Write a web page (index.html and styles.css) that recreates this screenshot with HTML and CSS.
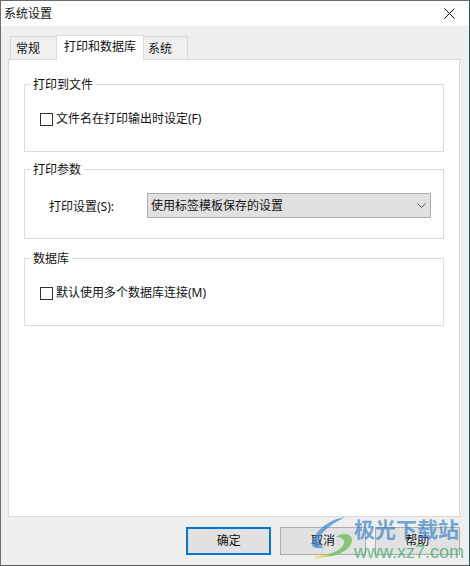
FILE: index.html
```html
<!DOCTYPE html>
<html lang="zh-CN">
<head>
<meta charset="utf-8">
<title>系统设置</title>
<link rel="stylesheet" href="styles.css">
</head>
<body>
<div class="window">
  <header class="titlebar">
    <span class="title">系统设置</span>
    <svg class="close" width="12" height="12" viewBox="0 0 12 12"><path d="M0.5 0.5L10.5 10.5M10.5 0.5L0.5 10.5" stroke="#111" stroke-width="1" fill="none"/></svg>
  </header>
  <div class="content">
    <nav class="tabs">
      <div class="tab tab-first">常规</div>
      <div class="tab tab-active">打印和数据库</div>
      <div class="tab tab-last">系统</div>
    </nav>
    <main class="panel">
      <section class="group group-a">
        <div class="legend">打印到文件</div>
        <label class="check"><span class="box"></span>文件名在打印输出时设定(F)</label>
      </section>
      <section class="group group-b">
        <div class="legend">打印参数</div>
        <div class="field">
          <span class="field-label">打印设置(S):</span>
          <div class="select">
            <span>使用标签模板保存的设置</span>
            <svg width="9" height="5" viewBox="0 0 9 5"><path d="M0.5 0.5L4.5 4.5L8.5 0.5" stroke="#555" stroke-width="1" fill="none"/></svg>
          </div>
        </div>
      </section>
      <section class="group group-c">
        <div class="legend">数据库</div>
        <label class="check"><span class="box"></span>默认使用多个数据库连接(M)</label>
      </section>
    </main>
    <footer class="actions">
      <button class="btn btn-default">确定</button>
      <button class="btn btn-cancel">取消</button>
      <button class="btn">帮助</button>
    </footer>
  </div>
  <div class="watermark">
    <svg class="wm-logo" width="44" height="44" viewBox="0 0 44 44">
      <path d="M0 27C2 15 15 3 33 0C22 6 12 12 8 20C6 25 8 29 12 31C5 32 0 31 0 27Z" fill="#3f8fd6" fill-opacity="0.75"/>
      <path d="M8 39C22 37 33 31 32 24C31 21 28 20 24 20C30 15 41 16 40 24C39 32 24 42 8 39Z" fill="#6fbf5a" fill-opacity="0.8"/>
      <path d="M3 39C8 39 14 38 19 36C14 40 8 42 3 41Z" fill="#f2d64b" fill-opacity="0.75"/>
    </svg>
    <div class="wm-name">极光下载站</div>
    <div class="wm-url">www.xz7.com</div>
  </div>
</div>
</body>
</html>
```
FILE: styles.css
```css
* { box-sizing: border-box; }
html, body { margin: 0; padding: 0; }
body {
  width: 470px;
  height: 566px;
  overflow: hidden;
  font-family: "Noto Sans", "Noto Sans CJK SC", sans-serif;
  font-size: 12px;
  line-height: 16px;
  color: #111;
}
.window {
  position: relative;
  width: 470px;
  height: 566px;
  display: flex;
  flex-direction: column;
  background: #efefef;
  border-top: 1px solid #5f6b75;
  border-left: 1px solid #6e6e6e;
  border-right: 1px solid #1f5f70;
  border-bottom: 1px solid #555;
}
.titlebar {
  height: 25px;
  flex: none;
  background: #fff;
  display: flex;
  align-items: center;
  justify-content: space-between;
  padding: 0 13px 0 3px;
}
.title { font-size: 12px; }
.close { display: block; }
.content {
  flex: 1;
  display: flex;
  flex-direction: column;
  padding: 0 9px 0 7px;
}
.tabs {
  height: 34px;
  flex: none;
  display: flex;
  align-items: flex-end;
  padding-left: 2px;
  position: relative;
  z-index: 1;
  margin-bottom: -1px;
}
.tab {
  height: 23px;
  border: 1px solid #d9d9d9;
  border-bottom: 0;
  background: #f0f0f0;
  padding-top: 4px;
  margin-bottom: 1px;
}
.tab-first { width: 46px; padding-left: 5px; border-right: 0; }
.tab-active {
  width: 88px;
  height: 25px;
  margin-bottom: 0;
  background: #fff;
  padding: 3px 0 0 7px;
}
.tab-last { width: 44px; padding-left: 4px; border-left: 0; }
.panel {
  height: 458px;
  flex: none;
  background: #fff;
  border: 1px solid #d9d9d9;
  padding: 24px 15px 0;
  display: flex;
  flex-direction: column;
}
.group {
  width: 420px;
  border: 1px solid #dcdcdc;
  flex: none;
}
.group-a { height: 68px; }
.group-b { height: 70px; margin-top: 17px; }
.group-c { height: 68px; margin-top: 19px; }
.legend {
  width: fit-content;
  margin: -8px 0 0 5px;
  padding: 0 3px;
  height: 16px;
  background: #fff;
}
.check {
  display: flex;
  align-items: center;
  margin: 18px 0 0 15px;
  height: 16px;
}
.box {
  width: 13px;
  height: 13px;
  border: 1px solid #333;
  background: #fff;
  margin-right: 3px;
  flex: none;
}
.field {
  display: flex;
  align-items: center;
  margin-top: 15px;
  padding-left: 24px;
}
.field-label { width: 98px; flex: none; padding-top: 3px; }
.select {
  width: 284px;
  height: 25px;
  background: #e1e1e1;
  border: 1px solid #adadad;
  display: flex;
  align-items: center;
  justify-content: space-between;
  padding: 0 4px 0 3px;
}
.actions {
  flex: 1;
  display: flex;
  gap: 9px;
  padding: 10px 0 0 178px;
}
.btn {
  width: 86px;
  height: 28px;
  padding: 0;
  background: #e1e1e1;
  border: 1px solid #adadad;
  font: inherit;
  color: #111;
}
.btn-default { border: 2px solid #0078d7; }
.watermark {
  position: absolute;
  left: 311px;
  top: 515px;
  width: 158px;
  height: 49px;
  pointer-events: none;
}
.wm-logo { position: absolute; left: 0; top: 1px; }
.wm-name {
  position: absolute;
  left: 42px;
  top: -1px;
  font-family: "Noto Sans CJK SC", sans-serif;
  font-size: 21px;
  line-height: 26px;
  font-weight: 700;
  color: #2f7fc8;
  opacity: 0.65;
  white-space: nowrap;
}
.wm-url {
  position: absolute;
  left: 42px;
  top: 26px;
  font-family: "Liberation Sans", sans-serif;
  font-size: 18px;
  line-height: 20px;
  color: #3fae6a;
  opacity: 0.75;
  white-space: nowrap;
}
```
